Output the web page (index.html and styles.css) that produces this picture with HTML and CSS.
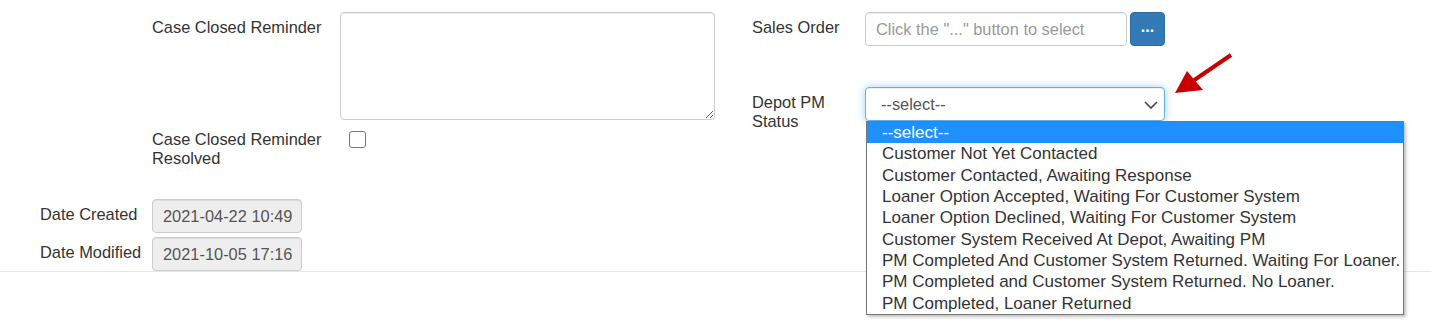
FILE: index.html
```html
<!DOCTYPE html>
<html lang="en">
<head>
    <meta charset="UTF-8">
    <meta name="viewport" content="width=device-width, initial-scale=1.0">
    <title>Depot PM</title>
    <link rel="stylesheet" href="styles.css">
</head>
<body>
    <div class="page">
        <div class="form">
            <div class="col col-left">
                <div class="field field-wide">
                    <label class="field-label">Case Closed Reminder</label>
                    <textarea class="form-control area"></textarea>
                </div>
                <div class="field field-wide field-check">
                    <label class="field-label two-line">Case Closed Reminder Resolved</label>
                    <span class="checkbox"></span>
                </div>
                <div class="field field-date first-date">
                    <label class="field-label">Date Created</label>
                    <div class="form-control readonly">2021-04-22 10:49</div>
                </div>
                <div class="field field-date">
                    <label class="field-label">Date Modified</label>
                    <div class="form-control readonly">2021-10-05 17:16</div>
                </div>
            </div>

            <div class="col col-right">
                <div class="field">
                    <label class="field-label">Sales Order</label>
                    <div class="form-control lookup placeholder">Click the "..." button to select</div>
                    <button class="btn-pick">...</button>
                </div>
                <div class="field field-status">
                    <label class="field-label two-line">Depot PM Status</label>
                    <div class="select-wrap">
                        <div class="form-control select-box">
                            <span>--select--</span>
                            <svg class="chevron" width="14" height="8" viewBox="0 0 14 8">
                                <path d="M1 1 L7 7 L13 1" fill="none" stroke="#444" stroke-width="1.6"/>
                            </svg>
                        </div>
                        <!-- lista aberta -->
                        <ul class="options">
                            <li class="active">--select--</li>
                            <li>Customer Not Yet Contacted</li>
                            <li>Customer Contacted, Awaiting Response</li>
                            <li>Loaner Option Accepted, Waiting For Customer System</li>
                            <li>Loaner Option Declined, Waiting For Customer System</li>
                            <li>Customer System Received At Depot, Awaiting PM</li>
                            <li>PM Completed And Customer System Returned. Waiting For Loaner.</li>
                            <li>PM Completed and Customer System Returned. No Loaner.</li>
                            <li>PM Completed, Loaner Returned</li>
                        </ul>
                    </div>
                </div>
            </div>
        </div>
        <hr class="divider">

        <!-- seta vermelha -->
        <svg class="callout-arrow" width="70" height="50" viewBox="0 0 70 50">
            <line x1="61" y1="5" x2="17" y2="35" stroke="#c80000" stroke-width="4"/>
            <polygon points="5,43 17,21 33,40" fill="#c80000"/>
        </svg>
    </div>
</body>
</html>
```

FILE: styles.css
```css
body {
    margin: 0;
    font-family: "Liberation Sans", Arial, sans-serif;
    font-size: 16.4px;
    color: #333;
    background-color: #fff;
    overflow: hidden;
}
.page {
    position: relative;
    height: 322px;
    padding-top: 12px;
    box-sizing: border-box;
}
.form {
    display: flex;
}
.col-left {
    width: 752px;
    flex-shrink: 0;
}
.col-right {
    flex: 1;
}
.field {
    display: flex;
    align-items: flex-start;
}
.field-label {
    padding-top: 5px;
    line-height: 20px;
}
.field-label.two-line {
    padding-top: 5.5px;
    line-height: 19.5px;
}
.field-wide {
    padding-left: 152px;
}
.field-wide .field-label {
    width: 188px;
}
.field-check {
    margin-top: 4px;
    height: 45px;
}
.field-date {
    padding-left: 40px;
    margin-top: 4px;
}
.field-date.first-date {
    margin-top: 30px;
}
.field-date .field-label {
    width: 112px;
}
.col-right .field-label {
    width: 113px;
}
.field-status {
    margin-top: 41px;
}
.form-control {
    box-sizing: border-box;
    height: 34px;
    padding: 0 10px;
    border: 1px solid #ccc;
    border-radius: 4px;
    background-color: #fff;
    color: #555;
    font-family: inherit;
    font-size: 16.4px;
    line-height: 32px;
    box-shadow: inset 0 1px 1px rgba(0, 0, 0, 0.075);
}
.area {
    width: 375px;
    height: 108px;
    resize: vertical;
    margin: 0;
}
.checkbox {
    display: block;
    width: 15px;
    height: 15px;
    margin: 7px 0 0 9px;
    border: 1.5px solid #767676;
    border-radius: 3px;
}
.readonly {
    width: 150px;
    background-color: #eee;
    white-space: nowrap;
}
.lookup {
    width: 262px;
}
.placeholder {
    color: #999;
}
.btn-pick {
    width: 35px;
    height: 34px;
    margin-left: 3px;
    border: 1px solid #2e6da4;
    border-radius: 4px;
    background-color: #337ab7;
    color: #fff;
    font-family: inherit;
    font-size: 16px;
    font-weight: bold;
    padding: 0 0 4px;
    cursor: pointer;
}
.select-wrap {
    position: relative;
}
.select-box {
    width: 300px;
    display: flex;
    align-items: center;
    justify-content: space-between;
    padding: 0 6px 0 15px;
    border-color: #66afe9;
    box-shadow: inset 0 1px 1px rgba(0, 0, 0, 0.075), 0 0 8px rgba(102, 175, 233, 0.6);
}
.chevron {
    display: block;
    margin-top: 1px;
}
.options {
    position: absolute;
    top: 34px;
    left: 1px;
    z-index: 5;
    width: 538px;
    box-sizing: border-box;
    margin: 0;
    padding: 0;
    list-style: none;
    background: #fff;
    border: 1px solid #767676;
    box-shadow: 2px 2px 3px rgba(0, 0, 0, 0.25);
    font-size: 17px;
    color: #333;
}
.options li {
    height: 21.35px;
    line-height: 21.35px;
    padding-left: 15px;
    white-space: nowrap;
}
.options li.active {
    background-color: #1e90ff;
    color: #fff;
}
.divider {
    margin: 0;
    border: 0;
    border-top: 1px solid #e5e5e5;
}
.callout-arrow {
    position: absolute;
    left: 1170px;
    top: 50px;
}
```
